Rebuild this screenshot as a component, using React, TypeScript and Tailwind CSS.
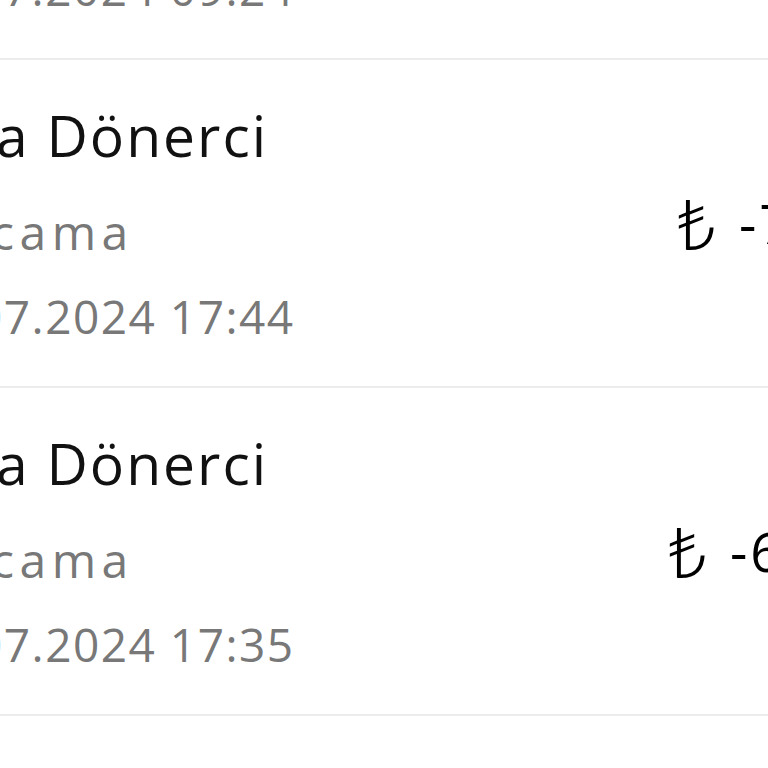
const rows = [
  {
    title: "a Dönerci",
    category: "cama",
    date: "07.2024 09:24",
    amount: "-75,00",
    amountClass: "w-[91px]",
  },
  {
    title: "a Dönerci",
    category: "cama",
    date: "07.2024 17:44",
    amount: "-75,00",
    amountClass: "w-[91px]",
  },
  {
    title: "a Dönerci",
    category: "cama",
    date: "07.2024 17:35",
    amount: "-60,00",
    amountClass: "w-[100px]",
  },
  {
    title: "a Dönerci",
    category: "cama",
    date: "07.2024 16:10",
    amount: "-55,00",
    amountClass: "w-[100px]",
  },
];

function TransactionRow({ row }: { row: (typeof rows)[number] }) {
  return (
    <div className="flex h-[328px] shrink-0 items-center border-b-2 border-[#ececee]">
      <div className="flex min-w-0 flex-1 flex-col">
        <span className="-ml-[4px] whitespace-nowrap text-[57px] leading-[66px] tracking-[2px] text-[#111111]">
          {row.title}
        </span>
        <span className="-ml-[9px] mt-[36px] whitespace-nowrap text-[48px] leading-[56px] tracking-[5.5px] text-[#787878]">
          {row.category}
        </span>
        <span className="-ml-[24px] mt-[28px] whitespace-nowrap text-[46px] leading-[56px] tracking-[1.5px] text-[#787878]">
          {row.date}
        </span>
      </div>
      <div className={`flex shrink-0 items-center whitespace-nowrap text-black ${row.amountClass}`}>
        <span
          className="text-[70px] font-light leading-[60px]"
          style={{ fontFamily: '"Noto Sans", "DejaVu Sans", sans-serif' }}
        >
          ₺
        </span>
        <span className="ml-[22px] text-[54px] leading-[60px] tracking-[3px]">{row.amount}</span>
      </div>
    </div>
  );
}

export default function App() {
  return (
    <div
      className="h-[768px] w-[768px] overflow-hidden bg-white"
      style={{ fontFamily: '"Open Sans", "DejaVu Sans", sans-serif' }}
    >
      <div className="-mt-[268px] flex flex-col">
        {rows.map((row, i) => (
          <TransactionRow key={i} row={row} />
        ))}
      </div>
    </div>
  );
}
